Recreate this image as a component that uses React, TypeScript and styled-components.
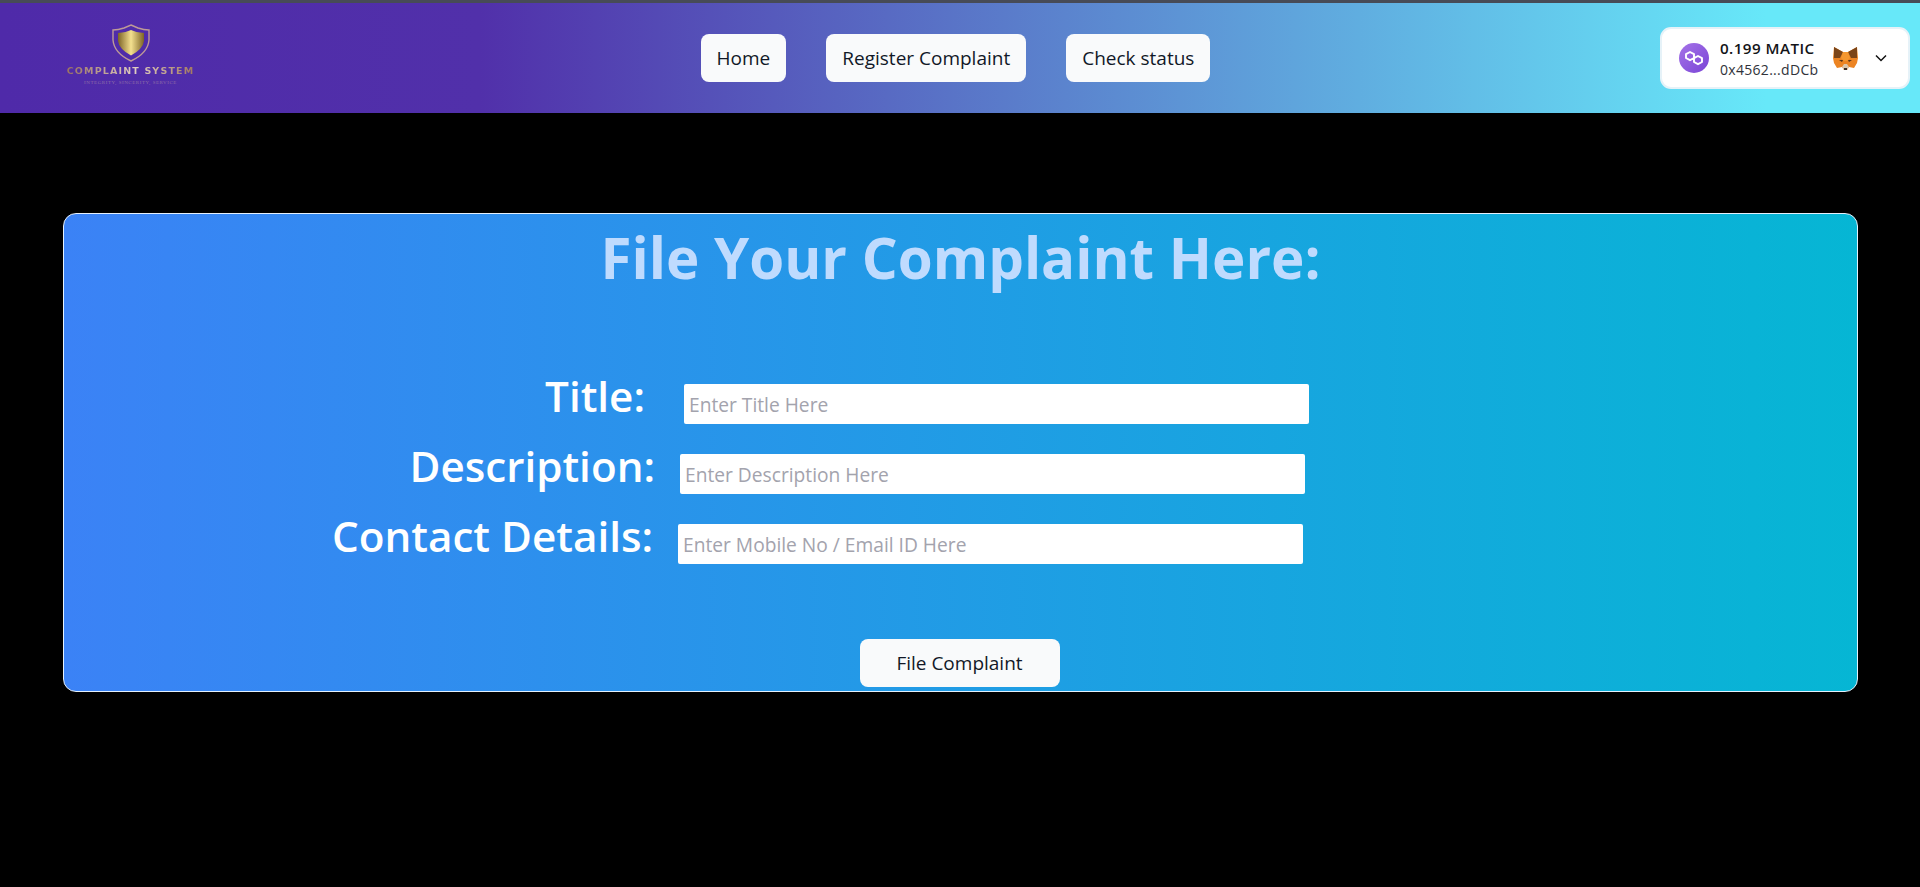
import React from 'react';
import styled, { createGlobalStyle } from 'styled-components';

const GlobalStyle = createGlobalStyle`
  html, body {
    margin: 0;
    height: 100%;
    background: #000;
    overflow: hidden;
  }
  body {
    font-family: 'Open Sans', 'Noto Sans', sans-serif;
  }
`;

const Page = styled.div`
  min-height: 887px;
  background: #000;
`;

const Navbar = styled.header`
  box-sizing: border-box;
  height: 113px;
  padding: 0 10px;
  border-top: 3px solid #474b57;
  display: flex;
  align-items: center;
  justify-content: space-between;
  background: linear-gradient(90deg, #4f2aa9 0%, #5130aa 25%, #67e8f9 92%, #67e8f9 100%);
`;

const LogoBox = styled.div`
  width: 241px;
  padding-bottom: 6px;
  display: flex;
  flex-direction: column;
  align-items: center;
`;

const LogoName = styled.span`
  margin-top: 3px;
  font-family: 'DejaVu Sans', sans-serif;
  font-size: 9.5px;
  font-weight: 700;
  letter-spacing: 1.15px;
  line-height: 12px;
  white-space: nowrap;
  background: linear-gradient(90deg, #9a7263 0%, #e0cec2 55%, #a3795f 100%);
  -webkit-background-clip: text;
  background-clip: text;
  color: transparent;
`;

const LogoTagline = styled.span`
  margin-top: 2px;
  font-family: 'Liberation Serif', serif;
  font-size: 5px;
  letter-spacing: 0.55px;
  line-height: 8px;
  white-space: nowrap;
  color: #8f6fa8;
`;

const NavLinks = styled.nav`
  display: flex;
  gap: 40px;
`;

const PillButton = styled.button`
  box-sizing: border-box;
  height: 48px;
  padding: 0 16px;
  border: none;
  border-radius: 8px;
  background: #f9fafb;
  color: #111827;
  font-family: inherit;
  font-size: 19px;
  white-space: nowrap;
`;

const Wallet = styled.div`
  box-sizing: border-box;
  width: 250px;
  height: 62px;
  padding: 0 20px 0 17px;
  display: flex;
  align-items: center;
  background: #fff;
  border: 2px solid #e6f2f8;
  border-radius: 11px;
`;

const WalletText = styled.div`
  margin-left: 11px;
  flex: 1;
  display: flex;
  flex-direction: column;
  gap: 3px;
`;

const Balance = styled.span`
  font-size: 15.2px;
  font-weight: 600;
  line-height: 20px;
  letter-spacing: 0.45px;
  color: #131418;
`;

const Address = styled.span`
  font-size: 14px;
  line-height: 18px;
  letter-spacing: 0.3px;
  color: #30333a;
`;

const Card = styled.section`
  box-sizing: border-box;
  width: 1795px;
  height: 479px;
  margin: 100px 0 0 63px;
  border: 1px solid #e5f0fb;
  border-radius: 13px;
  padding-top: 8px;
  background: linear-gradient(90deg, #3b82f6, #06b6d4);
  display: flex;
  flex-direction: column;
`;

const Heading = styled.h1`
  margin: 0 0 75px;
  text-align: center;
  font-size: 56.5px;
  font-weight: 700;
  line-height: 72px;
  color: #bfdbfe;
`;

const FormRow = styled.div<{ $end: number; $gap: number }>`
  width: ${({ $end }) => $end}px;
  height: 70px;
  display: flex;
  align-items: center;
  justify-content: flex-end;
  gap: ${({ $gap }) => $gap}px;
`;

const Label = styled.label`
  margin-bottom: 17px;
  font-size: 42.2px;
  font-weight: 600;
  line-height: 52px;
  color: #fff;
  white-space: nowrap;
`;

const TextInput = styled.input`
  box-sizing: border-box;
  width: 625px;
  height: 40px;
  padding: 0 5px;
  border: none;
  border-radius: 2px;
  background: #fff;
  font-family: inherit;
  font-size: 19.2px;
  &::placeholder {
    color: #a3a3ad;
    opacity: 1;
  }
`;

const Actions = styled.div`
  margin-top: 60px;
  padding-right: 2px;
  display: flex;
  justify-content: center;
`;

const SubmitButton = styled(PillButton)`
  width: 200px;
  padding: 0;
`;

const ChevronMark = styled.svg`
  margin-left: 15px;
`;

const ShieldLogo = () => (
  <svg width="40" height="38" viewBox="0 0 40 38">
    <defs>
      <linearGradient id="gold" x1="0" x2="1" y1="0" y2="0">
        <stop offset="0" stopColor="#7d6426" />
        <stop offset="0.5" stopColor="#f4e08f" />
        <stop offset="1" stopColor="#7d6426" />
      </linearGradient>
    </defs>
    <path
      d="M20 1 L27 4 Q33 6 38 6 L38 16 Q37 29 20 37 Q3 29 2 16 L2 6 Q7 6 13 4 Z"
      fill="none"
      stroke="#bd9a97"
      strokeWidth="1.4"
    />
    <path d="M20 6 Q26 9 33 9 L33 17 Q32 25 20 31.5 Q8 25 7 17 L7 9 Q14 9 20 6 Z" fill="url(#gold)" />
  </svg>
);

const PolygonIcon = () => (
  <svg width="30" height="30" viewBox="0 0 30 30">
    <defs>
      <linearGradient id="matic" x1="0" x2="1" y1="0" y2="1">
        <stop offset="0" stopColor="#a573e8" />
        <stop offset="1" stopColor="#7a45d6" />
      </linearGradient>
    </defs>
    <circle cx="15" cy="15" r="15" fill="url(#matic)" />
    <path
      d="M11 9 L15 11.2 V15 L11 17.2 L7 15 V11.2 Z M19 13 L23 15.2 V19 L19 21.2 L15 19 V15.2 Z"
      fill="none"
      stroke="#fff"
      strokeWidth="1.9"
      strokeLinejoin="round"
    />
  </svg>
);

const FoxIcon = () => (
  <svg width="27" height="25" viewBox="0 0 27 25">
    <polygon points="2,1 11,6 16,6 25,1 26,12 25,17 22,22 17,21 15,24 12,24 10,21 5,22 2,17 1,12" fill="#ec8423" />
    <polygon points="2,1 11,6 8,12 2,12" fill="#7b4518" />
    <polygon points="25,1 16,6 19,12 25,12" fill="#7b4518" />
    <polygon points="9,12 11,6 16,6 18,12 15,15 12,15" fill="#f5972f" />
    <polygon points="7,14 11,14 10,16" fill="#54341b" />
    <polygon points="20,14 16,14 17,16" fill="#54341b" />
    <polygon points="10,21 12,18 15,18 17,21 15,24 12,24" fill="#dcc6ab" />
    <polygon points="12,22 15,22 15,24 12,24" fill="#3a2c25" />
  </svg>
);

const Chevron = () => (
  <ChevronMark width="14" height="14" viewBox="0 0 14 14">
    <path d="M2 4.5 L7 9.5 L12 4.5" fill="none" stroke="#111" strokeWidth="1.5" />
  </ChevronMark>
);

export default function App() {
  return (
    <Page>
      <GlobalStyle />
      <Navbar>
        <LogoBox>
          <ShieldLogo />
          <LogoName>COMPLAINT SYSTEM</LogoName>
          <LogoTagline>INTEGRITY, SINCERITY, SERVICE</LogoTagline>
        </LogoBox>
        <NavLinks>
          <PillButton>Home</PillButton>
          <PillButton>Register Complaint</PillButton>
          <PillButton>Check status</PillButton>
        </NavLinks>
        <Wallet>
          <PolygonIcon />
          <WalletText>
            <Balance>0.199 MATIC</Balance>
            <Address>0x4562...dDCb</Address>
          </WalletText>
          <FoxIcon />
          <Chevron />
        </Wallet>
      </Navbar>
      <Card>
        <Heading>File Your Complaint Here:</Heading>
        <FormRow $end={1245} $gap={39}>
          <Label>Title:</Label>
          <TextInput placeholder="Enter Title Here" />
        </FormRow>
        <FormRow $end={1241} $gap={25}>
          <Label>Description:</Label>
          <TextInput placeholder="Enter Description Here" />
        </FormRow>
        <FormRow $end={1239} $gap={25}>
          <Label>Contact Details:</Label>
          <TextInput placeholder="Enter Mobile No / Email ID Here" />
        </FormRow>
        <Actions>
          <SubmitButton>File Complaint</SubmitButton>
        </Actions>
      </Card>
    </Page>
  );
}
